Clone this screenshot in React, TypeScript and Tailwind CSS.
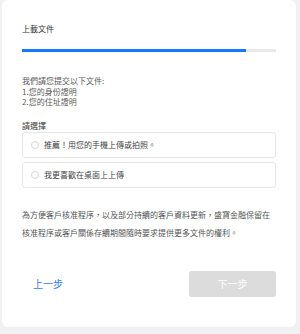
import React from "react";

const font = { fontFamily: '"Noto Sans CJK TC", "Noto Sans", sans-serif' };

function Option({ label }: { label: string }) {
  return (
    <div className="flex h-[26px] items-center rounded-[3px] border border-[#e6e6e6] pl-[8px]">
      <span className="h-[8px] w-[8px] rounded-full border border-[#d6d6d6] bg-white" />
      <span className="ml-[5px] text-[8px] leading-[10px] text-[#444]">{label}</span>
    </div>
  );
}

export default function App() {
  return (
    <div className="h-[334px] w-[300px] bg-[#f1f1f3]" style={font}>
      <div className="ml-[2px] flex h-[327px] w-[294px] flex-col rounded-[6px] bg-white px-[20px] pt-[23px]">
        <div className="text-[8px] leading-[12px] text-[#333]">上載文件</div>
        <div className="mt-[14px] flex h-[3px] w-full bg-[#e8e8e8]">
          <div className="h-full w-[224px] bg-[#1677ff]" />
        </div>
        <div className="mt-[24px] text-[8px] leading-[10.7px] text-[#5a5a5a]">
          <div>我們請您提交以下文件:</div>
          <div>1.您的身份證明</div>
          <div>2.您的住址證明</div>
        </div>
        <div className="mt-[13px] text-[8px] leading-[10px] text-[#444]">請選擇</div>
        <div className="mt-[1px] flex flex-col gap-[4px]">
          <Option label="推薦！用您的手機上傳或拍照。" />
          <Option label="我更喜歡在桌面上上傳" />
        </div>
        <div className="mt-[18px] text-[8px] leading-[18px] text-[#555]">
          為方便客戶核准程序，以及部分持續的客戶資料更新，盛寶金融保留在核准程序或客戶關係存續期間隨時要求提供更多文件的權利。
        </div>
        <div className="mt-[29px] flex items-center justify-between">
          <button className="h-[26px] px-[11px] text-[10px] leading-[26px] text-[#2f7bf5]">上一步</button>
          <button className="h-[26px] w-[87px] rounded-[3px] bg-[#dcdcdc] text-[10px] leading-[26px] text-white">
            下一步
          </button>
        </div>
      </div>
    </div>
  );
}
